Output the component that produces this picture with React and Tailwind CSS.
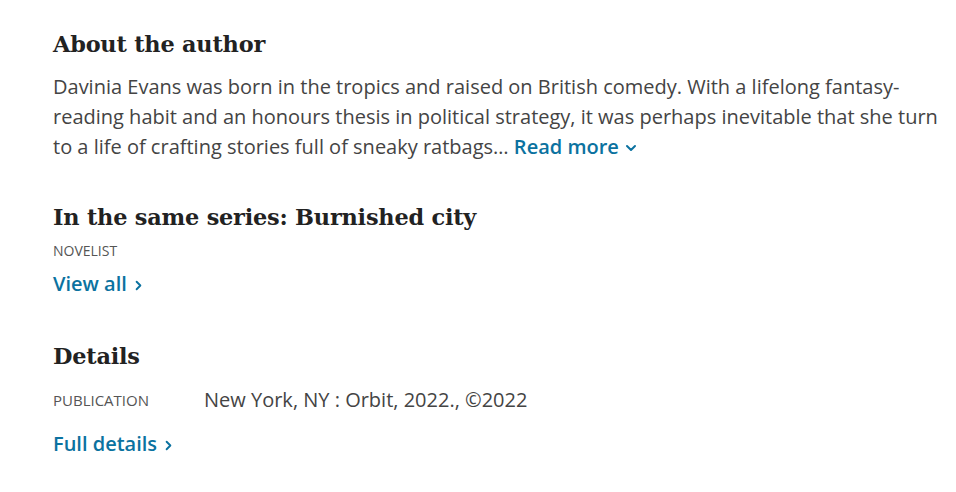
import React from 'react';
import { ChevronDown, ChevronRight } from 'lucide-react';

const serif = { fontFamily: '"DejaVu Serif", "Liberation Serif", serif' };

const App = () => {
  return (
    <div className="w-[956px] h-[492px] bg-white pl-[53px] pr-[14px] pt-[28px] font-['Open_Sans',sans-serif] text-[#444]">
      {/* About */}
      <section>
        <h2 style={serif} className="text-[22.4px] font-bold text-[#222] leading-[32px] tracking-[-0.2px]">About the author</h2>
        <p className="mt-[12px] text-[20px] leading-[30px]">
          Davinia Evans was born in the tropics and raised on British comedy. With a lifelong fantasy-reading habit and an honours thesis in political strategy, it was perhaps inevitable that she turn to a life of crafting stories full of sneaky ratbags…{' '}
          <a className="font-semibold text-[#0b72a0]">
            Read more<ChevronDown size={16} strokeWidth={3} className="inline-block ml-[4px] align-[-2px]" />
          </a>
        </p>
      </section>

      {/* Series */}
      <section className="mt-[39px]">
        <h2 style={serif} className="text-[22.4px] font-bold text-[#222] leading-[32px] tracking-[-0.2px]">In the same series: Burnished city</h2>
        <p className="mt-[8px] text-[14px] uppercase text-[#555] leading-[20px]">Novelist</p>
        <a className="mt-[9px] inline-flex items-center gap-[4px] text-[20px] leading-[28px] font-semibold text-[#0b72a0]">
          View all <ChevronRight size={15} strokeWidth={3} className="mt-[2px]" />
        </a>
      </section>

      {/* Details */}
      <section className="mt-[42px]">
        <h2 style={serif} className="text-[22.4px] font-bold text-[#222] leading-[32px] tracking-[-0.2px]">Details</h2>
        <div className="mt-[13px] flex items-center">
          <span className="w-[151px] text-[15px] uppercase text-[#555]">Publication</span>
          <span className="text-[20px] leading-[30px]">New York, NY : Orbit, 2022., ©2022</span>
        </div>
        <a className="mt-[15px] inline-flex items-center gap-[4px] text-[20px] leading-[28px] font-semibold text-[#0b72a0]">
          Full details <ChevronRight size={15} strokeWidth={3} className="mt-[2px]" />
        </a>
      </section>
    </div>
  );
};

export default App;
